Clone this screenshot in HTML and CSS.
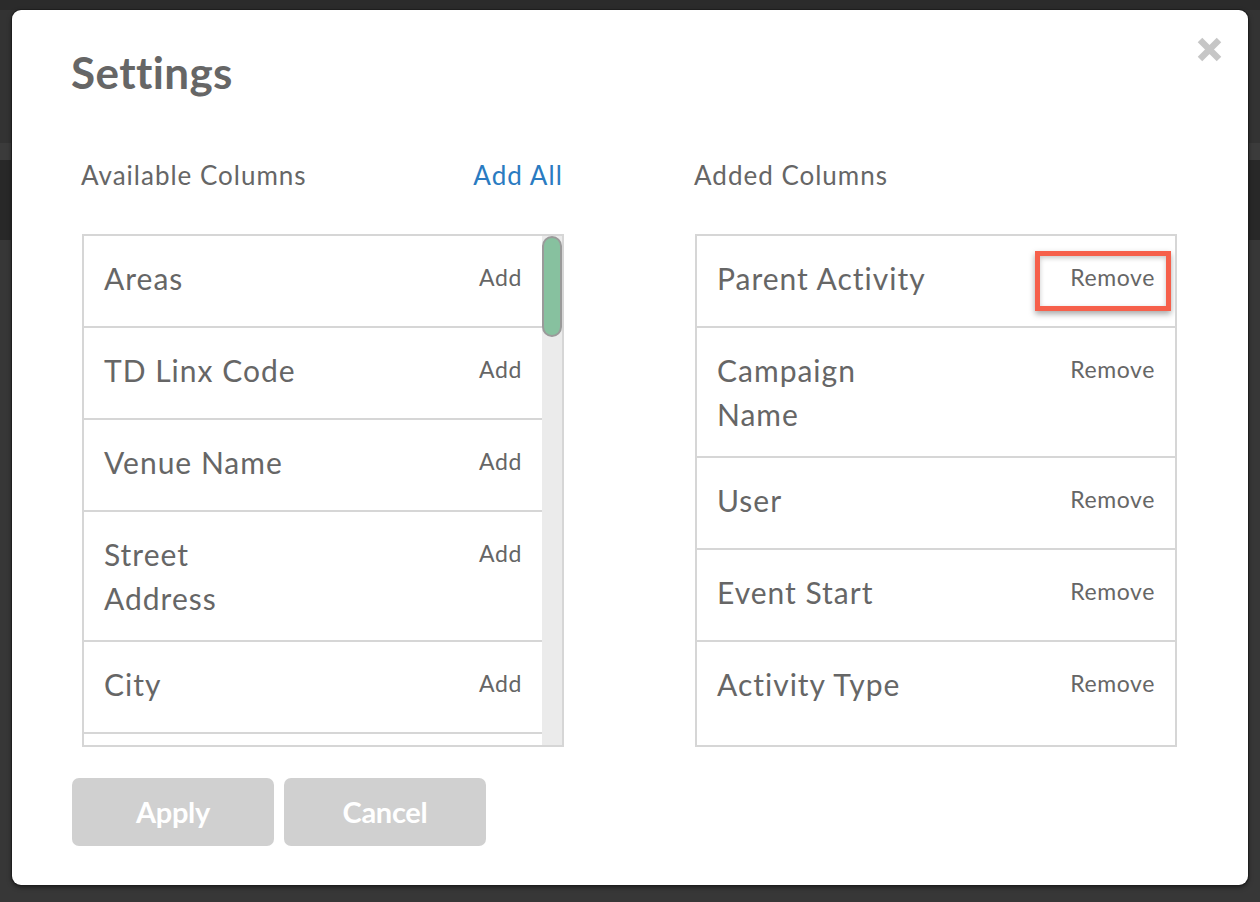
FILE: index.html
```html
<!DOCTYPE html>
<html lang="en">
<head>
<meta charset="utf-8">
<title>Settings</title>
<link rel="stylesheet" href="styles.css">
</head>
<body>
<div class="modal">
  <div class="modal-header">
    <h1 class="title">Settings</h1>
    <button class="close" aria-label="Close">
      <svg width="25" height="25" viewBox="0 0 25 25"><path d="M3 3 L22 22 M22 3 L3 22" stroke="#c6c6c6" stroke-width="6.4" fill="none"/></svg>
    </button>
  </div>
  <div class="columns">
    <section class="col">
      <div class="col-head">
        <span class="col-label">Available Columns</span>
        <a class="add-all" href="#">Add All</a>
      </div>
      <div class="box box-scroll">
        <div class="list">
          <div class="row"><span class="name">Areas</span><span class="action">Add</span></div>
          <div class="row"><span class="name">TD Linx Code</span><span class="action">Add</span></div>
          <div class="row"><span class="name">Venue Name</span><span class="action">Add</span></div>
          <div class="row"><span class="name">Street<br>Address</span><span class="action">Add</span></div>
          <div class="row"><span class="name">City</span><span class="action">Add</span></div>
          <div class="row row-partial"></div>
        </div>
        <div class="track"><div class="thumb"></div></div>
      </div>
    </section>
    <section class="col">
      <div class="col-head">
        <span class="col-label">Added Columns</span>
      </div>
      <div class="box">
        <div class="list list-added">
          <div class="row row-marked"><span class="name">Parent Activity</span><span class="action">Remove</span><span class="highlight"></span></div>
          <div class="row"><span class="name">Campaign<br>Name</span><span class="action">Remove</span></div>
          <div class="row"><span class="name">User</span><span class="action">Remove</span></div>
          <div class="row"><span class="name">Event Start</span><span class="action">Remove</span></div>
          <div class="row"><span class="name">Activity Type</span><span class="action">Remove</span></div>
        </div>
      </div>
    </section>
  </div>
  <div class="buttons">
    <button class="btn">Apply</button>
    <button class="btn">Cancel</button>
  </div>
</div>
</body>
</html>
```

FILE: styles.css
```css
* { box-sizing: border-box; }

html, body {
  margin: 0;
  height: 902px;
  overflow: hidden;
}

body {
  font-family: "Lato", "Open Sans", sans-serif;
  color: #666;
  background: linear-gradient(to bottom,
    #2b2b2b 0, #2b2b2b 10px,
    #333333 10px, #333333 143px,
    #3b3b3b 143px, #3b3b3b 160px,
    #282828 160px, #282828 240px,
    #373737 240px, #373737 100%);
  padding: 10px 12px 0 12px;
}

.modal {
  width: 1236px;
  height: 875px;
  background: #fff;
  border-radius: 9px;
  box-shadow: 0 0 0 1px #1e1e1e, 0 2px 5px rgba(0,0,0,0.55);
  display: flex;
  flex-direction: column;
}

.modal-header {
  display: flex;
  justify-content: space-between;
  align-items: flex-start;
  padding: 27px 26px 0 59px;
}

.title {
  margin: 9px 0 0 0;
  font-size: 44px;
  line-height: 52px;
  font-weight: 700;
  letter-spacing: 0.4px;
  color: #666;
}

.close {
  border: 0;
  padding: 0;
  background: none;
  width: 25px;
  height: 25px;
  display: block;
}
.close svg { display: block; }

.columns {
  display: flex;
  gap: 131px;
  padding-left: 70px;
  margin-top: 61px;
}

.col { width: 482px; }

.col-head {
  display: flex;
  justify-content: space-between;
  height: 32px;
  line-height: 32px;
  font-size: 26px;
  letter-spacing: 1px;
  margin-bottom: 43px;
  padding-right: 1px;
}

.col-label { margin-left: -1px; }

.add-all {
  color: #2a7bc1;
  text-decoration: none;
  letter-spacing: 1.1px;
}

.box {
  height: 513px;
  border: 2px solid #d6d6d6;
  display: flex;
  overflow: hidden;
}

.list {
  flex: 1;
  display: flex;
  flex-direction: column;
  overflow: hidden;
}

.row {
  flex: none;
  display: flex;
  justify-content: space-between;
  align-items: flex-start;
  min-height: 92px;
  padding: 20px 20px 20px 20px;
  border-bottom: 2px solid #d6d6d6;
  position: relative;
}

.list-added .row:last-child {
  border-bottom: 0;
  flex: 1;
}

.name {
  font-size: 30px;
  line-height: 44px;
  letter-spacing: 1px;
}

.action {
  font-size: 23px;
  line-height: 41px;
  margin-top: 1px;
  letter-spacing: 0.6px;
}

.track {
  width: 20px;
  flex: none;
  background: #ebebeb;
}

.thumb {
  width: 20px;
  height: 101px;
  background: #87c19f;
  border: 2px solid #9a9a9a;
  border-radius: 10px;
}

.highlight {
  position: absolute;
  right: 4px;
  top: 15px;
  width: 136px;
  height: 60px;
  border: 5px solid #f6604b;
  box-shadow: 0 3px 6px rgba(0,0,0,0.35), inset 0 2px 5px rgba(0,0,0,0.22);
}

.buttons {
  display: flex;
  gap: 10px;
  padding-left: 60px;
  margin-top: 31px;
}

.btn {
  width: 202px;
  height: 68px;
  border: 0;
  border-radius: 7px;
  background: #d0d0d0;
  color: #fff;
  font-family: "Lato", sans-serif;
  font-weight: 700;
  font-size: 29px;
  letter-spacing: -0.3px;
  line-height: 66px;
  padding: 0;
  margin: 0;
}
```
